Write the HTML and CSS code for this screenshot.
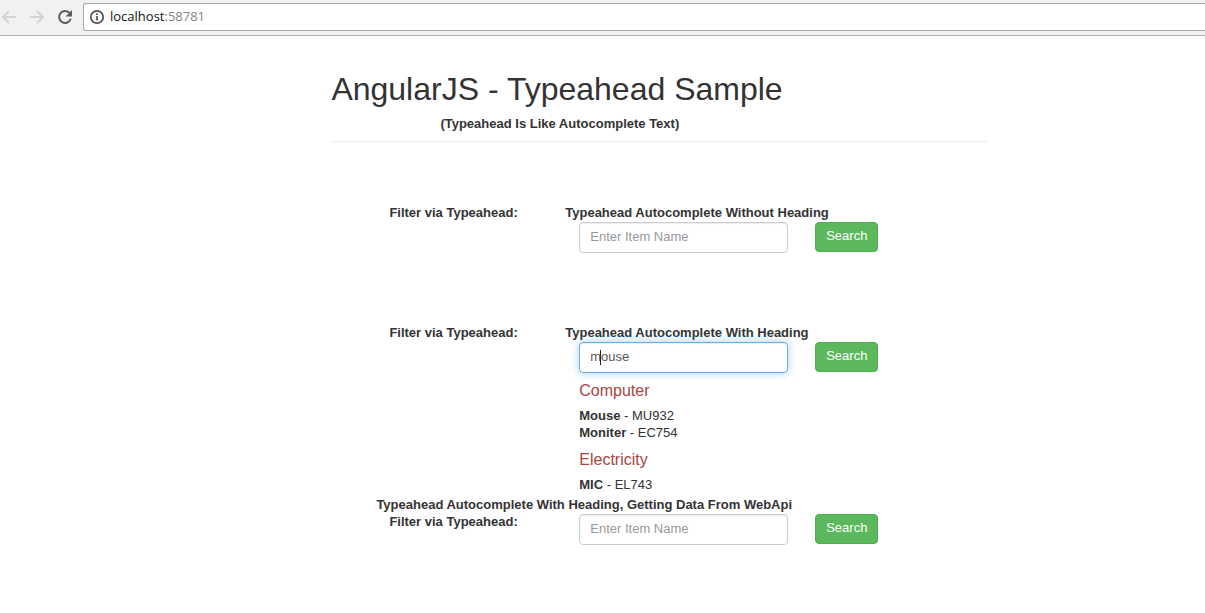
FILE: index.html
```html
<!DOCTYPE html>
<html lang="en">
<head>
  <meta charset="UTF-8">
  <meta name="viewport" content="width=device-width, initial-scale=1.0">
  <title>AngularJS - Typeahead Sample</title>
  <link rel="stylesheet" href="styles.css">
</head>
<body>

  <header class="toolbar">
    <button class="nav-btn" aria-label="Back" disabled>
      <svg viewBox="0 0 16 16"><path d="M16 8H3M9 2L3 8l6 6"/></svg>
    </button>
    <button class="nav-btn" aria-label="Forward" disabled>
      <svg viewBox="0 0 16 16"><path d="M2 8h13M9 2l6 6-6 6"/></svg>
    </button>
    <button class="nav-btn reload" aria-label="Reload">
      <svg viewBox="0 0 16 16"><path d="M13.8 4.2A6 6 0 1 0 14.8 9.8"/><path class="tip" d="M16 1v6.5H9.5z"/></svg>
    </button>
    <div class="address">
      <svg class="info" viewBox="0 0 16 16"><circle cx="8" cy="8" r="6.2"/><path d="M8 7v4.5M8 4.2v1.8"/></svg>
      <div class="url" role="textbox" aria-label="Address" contenteditable="true" spellcheck="false">localhost<span class="port">:58781</span></div>
    </div>
  </header>

  <main class="container">
    <div class="page-header">
      <h1>AngularJS - Typeahead Sample</h1>
      <p class="subtitle">(Typeahead Is Like Autocomplete Text)</p>
    </div>

    <form class="row">
      <label class="filter-label" for="item1">Filter via Typeahead:</label>
      <h2 class="heading">Typeahead Autocomplete Without Heading</h2>
      <div class="field">
        <input type="text" id="item1" class="form-control" placeholder="Enter Item Name" autocomplete="off">
      </div>
      <button type="button" class="btn">Search</button>
    </form>

    <form class="row">
      <label class="filter-label" for="item2">Filter via Typeahead:</label>
      <h2 class="heading">Typeahead Autocomplete With Heading</h2>
      <div class="field">
        <input type="text" id="item2" class="form-control active" value="mouse" autocomplete="off">
        <span class="caret" aria-hidden="true"></span>
      </div>
      <button type="button" class="btn">Search</button>
      <div class="results">
        <h3>Computer</h3>
        <p><strong>Mouse</strong> - MU932</p>
        <p><strong>Moniter</strong> - EC754</p>
        <h3>Electricity</h3>
        <p><strong>MIC</strong> - EL743</p>
      </div>
    </form>

    <form class="row row-api">
      <h2 class="heading">Typeahead Autocomplete With Heading, Getting Data From WebApi</h2>
      <label class="filter-label" for="item3">Filter via Typeahead:</label>
      <div class="field">
        <input type="text" id="item3" class="form-control" placeholder="Enter Item Name" autocomplete="off">
      </div>
      <button type="button" class="btn">Search</button>
    </form>
  </main>

</body>
</html>
```
FILE: styles.css
```css
* {
  box-sizing: border-box;
}

body {
  margin: 0;
  background: #fff;
  color: #333;
  font-family: "Liberation Sans", Arial, sans-serif;
  font-size: 13px;
  line-height: 17px;
}

h1, h2, h3, p {
  margin: 0;
}

/* browser bar */
.toolbar {
  display: flex;
  align-items: center;
  gap: 12px;
  height: 36px;
  padding-bottom: 2px;
  background: #f1f1f1;
  border-bottom: 1px solid #b0b0b0;
}

.nav-btn {
  width: 16px;
  height: 16px;
  padding: 0;
  border: none;
  background: none;
}

.nav-btn svg {
  display: block;
  fill: none;
  stroke: #d2d3d5;
  stroke-width: 2;
}

.nav-btn.reload svg {
  stroke: #5a5d61;
}

.nav-btn .tip {
  fill: #5a5d61;
  stroke: none;
}

.address {
  display: flex;
  flex: 1;
  align-items: center;
  gap: 5px;
  height: 28px;
  margin-left: -1px;
  padding-left: 5px;
  background: #fff;
  border: 1px solid #a9a9a9;
  border-right: none;
  border-radius: 3px 0 0 3px;
}

.info {
  width: 16px;
  height: 16px;
  fill: none;
  stroke: #4d4f52;
  stroke-width: 1.7;
}

.url {
  flex: 1;
  color: #111;
  font-family: "Open Sans", "Noto Sans", sans-serif;
  font-size: 13px;
  outline: none;
}

.port {
  color: #858585;
}

/* page */
.container {
  width: 54.5%;
  margin-left: 27.5%;
}

.page-header {
  padding: 35px 0 9px;
  margin-bottom: 62px;
  border-bottom: 1px solid #eee;
}

h1 {
  margin-bottom: 8px;
  font-size: 32px;
  font-weight: normal;
  line-height: 36px;
  white-space: nowrap;
}

.subtitle {
  padding-left: 109px;
  font-weight: bold;
}

.row {
  display: grid;
  grid-template-columns: minmax(0, 234fr) minmax(0, 223fr) minmax(0, 200fr);
  align-items: start;
}

.row + .row {
  margin-top: 71px;
}

.row + .row-api {
  margin-top: 3px;
}

.filter-label {
  padding-left: 58px;
  font-weight: bold;
}

.heading {
  grid-column: 2 / 4;
  font-size: 13px;
  line-height: 17px;
  white-space: nowrap;
}

.row-api .heading {
  grid-column: 1 / 4;
  padding-left: 45px;
}

.field {
  position: relative;
  grid-column: 2;
  margin-top: 1px;
  padding-left: 14px;
}

.form-control {
  display: block;
  width: 100%;
  height: 31px;
  padding: 4px 11px 6px 10px;
  color: #555;
  font-family: inherit;
  font-size: 13px;
  background: #fff;
  border: 1px solid #ccc;
  border-radius: 4px;
  box-shadow: inset 0 1px 1px rgba(0, 0, 0, 0.075);
}

.form-control::placeholder {
  color: #999;
}

.form-control.active,
.form-control:focus {
  border-color: #66afe9;
  outline: 0;
  box-shadow: inset 0 1px 1px rgba(0, 0, 0, 0.075), 0 0 8px rgba(102, 175, 233, 0.6);
}

.caret {
  position: absolute;
  top: 8px;
  left: 35px;
  width: 1px;
  height: 15px;
  background: #222;
}

.btn {
  justify-self: start;
  height: 30px;
  margin-top: 1px;
  margin-left: 27px;
  padding: 4px 10px 6px;
  color: #fff;
  font-family: inherit;
  font-size: 13px;
  line-height: 18px;
  background: #5cb85c;
  border: 1px solid #4cae4c;
  border-radius: 4px;
  cursor: pointer;
}

.btn:hover {
  background: #449d44;
}

.results {
  grid-column: 2 / 4;
  padding-left: 14px;
}

.results h3 {
  margin: 9px 0 7px;
  color: #a94442;
  font-size: 16px;
  font-weight: normal;
  line-height: 18px;
}

.results p + h3 {
  margin-top: 10px;
}
```
